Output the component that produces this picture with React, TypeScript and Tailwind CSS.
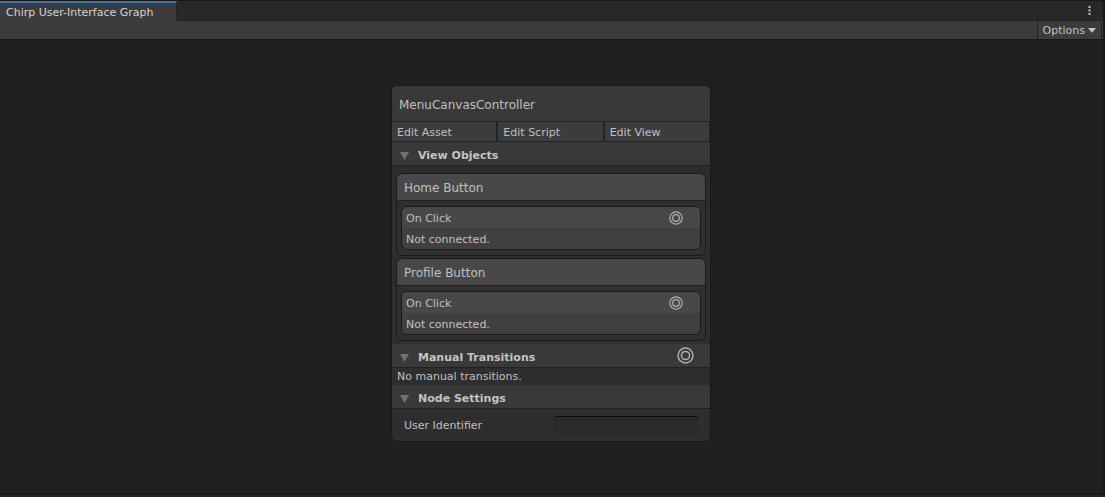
import { useState, type ReactNode } from "react";

function Target({ size }: { size: number }) {
  return (
    <svg width={size} height={size} viewBox="0 0 16 16" fill="none" stroke="#b0b0b0" strokeWidth="1.4" aria-hidden="true">
      <circle cx="8" cy="8" r="7" />
      <circle cx="8" cy="8" r="3.8" />
    </svg>
  );
}

function Section({ title, action, children }: { title: string; action?: ReactNode; children: ReactNode }) {
  const [open, setOpen] = useState(true);
  return (
    <section>
      <div className="flex h-6 items-center justify-between border-b border-[#212121] bg-[#393939] pr-4">
        <button
          type="button"
          aria-expanded={open}
          onClick={() => setOpen(!open)}
          className="flex items-center gap-[9px] pt-1 pl-2 text-[11px] leading-4 font-bold text-[#c4c4c4]"
        >
          <svg width="9" height="8" viewBox="0 0 9 8" fill="#727272" className={open ? "" : "-rotate-90"} aria-hidden="true">
            <path d="M0 0H9L4.5 8Z" />
          </svg>
          {title}
        </button>
        {action}
      </div>
      {open && children}
    </section>
  );
}

function ViewObject({ name }: { name: string }) {
  return (
    <article className="overflow-hidden rounded-md border border-[#191919] bg-[#2f2f2f]">
      <h3 className="border-b border-[#202020] bg-[#484848] px-[7px] pt-[6px] pb-1 text-[12px] leading-4">{name}</h3>
      <div className="px-1 py-[5px]">
        <div className="overflow-hidden rounded-md border border-[#191919] bg-[#404040]">
          <div className="flex h-[21px] items-center justify-between bg-[#484848] pr-[17px] pl-1">
            <span className="pt-[2px]">On Click</span>
            <button type="button" aria-label={"Connect " + name + " On Click"}>
              <Target size={14} />
            </button>
          </div>
          <p className="h-[21px] px-1 pt-1">Not connected.</p>
        </div>
      </div>
    </article>
  );
}

export default function App() {
  return (
    <div className="flex min-h-screen flex-col bg-[#191919] pt-px font-['DejaVu_Sans',sans-serif] text-[11px] leading-4 text-[#c0c0c0]">
      <div className="mr-[2px] flex flex-1 flex-col">
        <header>
          <div className="flex h-[19px] items-stretch justify-between rounded-tr bg-[#282828]">
            <div role="tablist" className="relative -mb-px flex">
              <button type="button" role="tab" aria-selected="true" className="border-t-2 border-r border-t-[#3a79bb] border-r-[#232323] bg-[#3c3c3c] pt-px pr-[22px] pl-[6px] text-[#d2d2d2]">
                Chirp User-Interface Graph
              </button>
            </div>
            <button type="button" aria-label="Window menu" className="mr-2 flex w-3 items-center justify-center">
              <svg width="3" height="9" viewBox="0 0 3 9" fill="#c4c4c4" aria-hidden="true">
                <rect x="0.5" width="2" height="2" />
                <rect x="0.5" y="3.5" width="2" height="2" />
                <rect x="0.5" y="7" width="2" height="2" />
              </svg>
            </button>
          </div>
          <div className="flex h-5 justify-end border-b border-[#191919] bg-[#3c3c3c]">
            <div className="flex-1 border-t border-[#232323]" />
            <button type="button" className="mr-px flex items-center gap-[3px] border-x border-t border-[#232323] px-[5px] pt-px">
              Options
              <svg width="8" height="5" viewBox="0 0 8 5" fill="#c4c4c4" className="-mt-px" aria-hidden="true">
                <path d="M0 0H8L4 4.8Z" />
              </svg>
            </button>
          </div>
        </header>

        <main className="flex flex-1 justify-center bg-[#202020] pt-[45px] pr-px pb-[51px]">
          <div className="w-80 self-start overflow-hidden rounded-md border border-[#191919] bg-[#2e2e2e]">
            <h2 className="border-b border-[#212121] bg-[#393939] px-[7px] pt-[11px] pb-2 text-[12px] leading-4">MenuCanvasController</h2>
            <div className="grid h-5 grid-cols-3 gap-[2px] border-b border-[#212121] bg-[#242424] pr-px">
              <button type="button" className="bg-[#3c3c3c] px-[5px] pt-[2px] text-left">Edit Asset</button>
              <button type="button" className="bg-[#3c3c3c] px-[5px] pt-[2px] text-left">Edit Script</button>
              <button type="button" className="bg-[#3c3c3c] px-[5px] pt-[2px] text-left">Edit View</button>
            </div>

            <Section title="View Objects">
              <div className="flex flex-col gap-[2px] px-1 pt-[7px] pb-[3px]">
                <ViewObject name="Home Button" />
                <ViewObject name="Profile Button" />
              </div>
            </Section>

            <Section
              title="Manual Transitions"
              action={
                <button type="button" aria-label="Add manual transition">
                  <Target size={17} />
                </button>
              }
            >
              <p className="h-[17px] px-[5px] pt-px">No manual transitions.</p>
            </Section>

            <Section title="Node Settings">
              <div className="flex items-center justify-between pt-[7px] pr-[11px] pb-[7px] pl-3">
                <label htmlFor="user-identifier" className="pt-px">User Identifier</label>
                <input
                  id="user-identifier"
                  type="text"
                  className="h-[18px] w-[146px] rounded-sm border-t border-[#0d0d0d] bg-[#2a2a2a] px-1 outline-none"
                />
              </div>
            </Section>
          </div>
        </main>
      </div>
      <footer className="mt-[2px] h-[2px] rounded-t bg-[#282525]" />
    </div>
  );
}
